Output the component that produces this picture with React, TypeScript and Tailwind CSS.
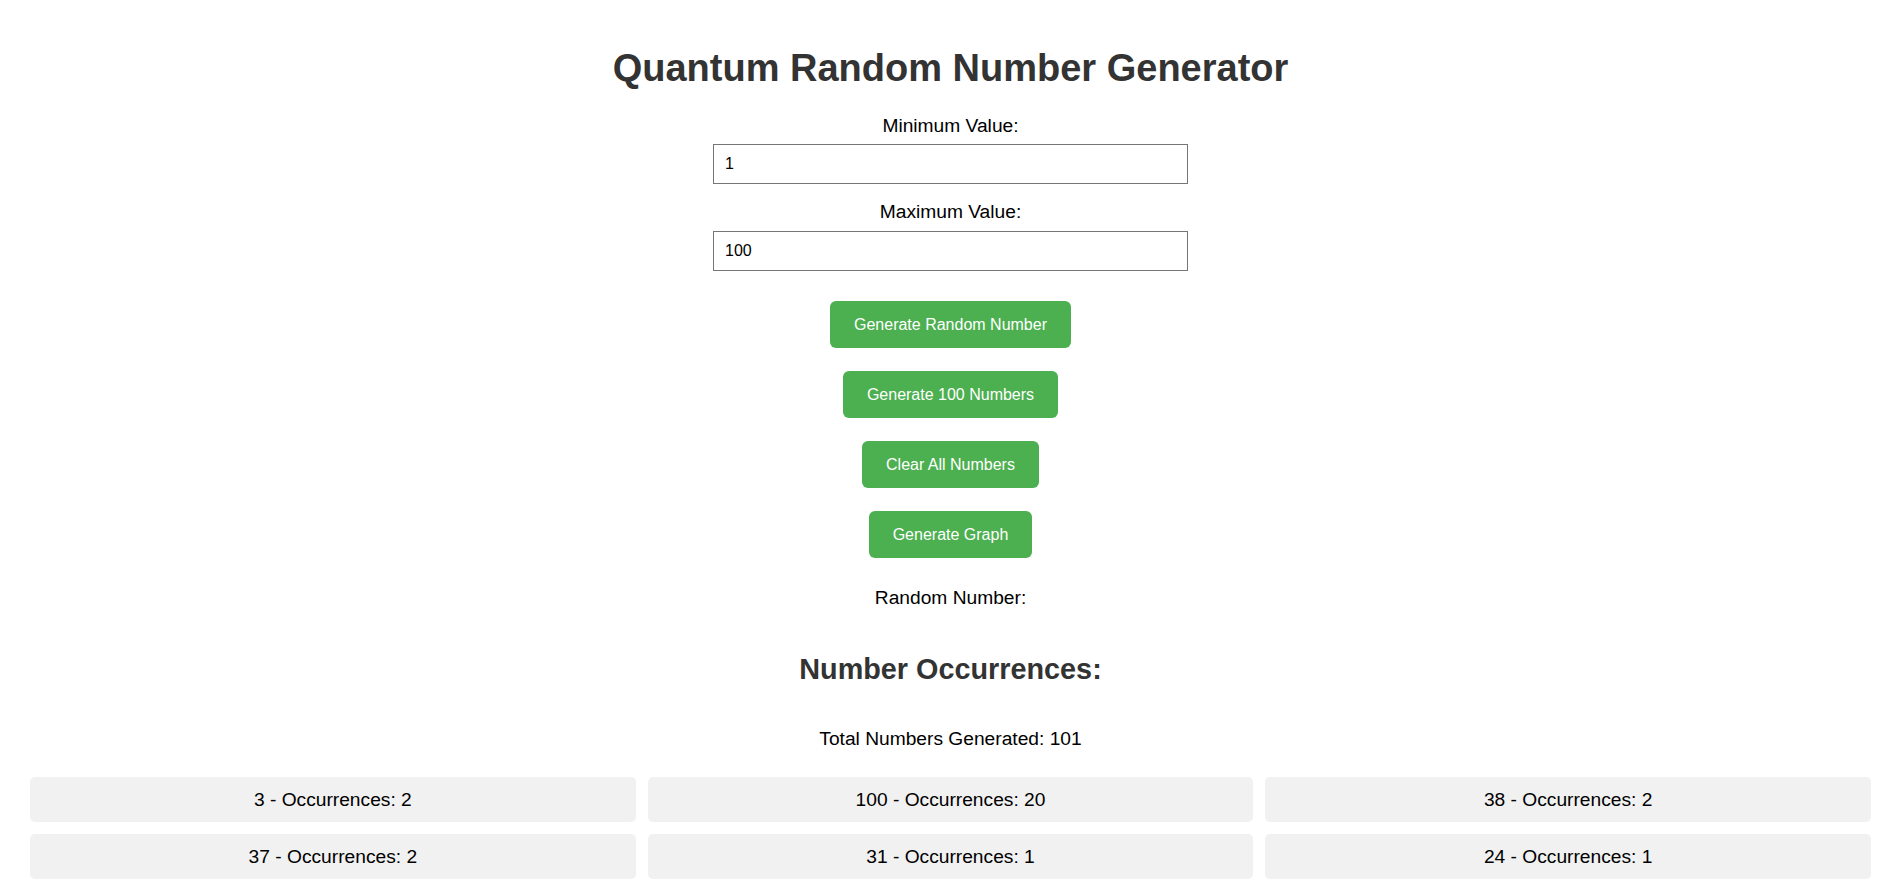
import React from "react";

const cells = [
  "3 - Occurrences: 2",
  "100 - Occurrences: 20",
  "38 - Occurrences: 2",
  "37 - Occurrences: 2",
  "31 - Occurrences: 1",
  "24 - Occurrences: 1",
];

const buttons = [
  "Generate Random Number",
  "Generate 100 Numbers",
  "Clear All Numbers",
  "Generate Graph",
];

export default function App() {
  return (
    <div
      className="min-h-[885px] w-full bg-white text-black"
      style={{ fontFamily: '"Liberation Sans", Arial, Helvetica, sans-serif' }}
    >
      <div className="flex flex-col items-center pt-[46px]">
        <h1 className="text-[38px] font-bold leading-[44px] text-[#333333]">
          Quantum Random Number Generator
        </h1>
        <label className="mt-[25px] text-[19.2px] leading-[22px]">Minimum Value:</label>
        <input
          className="mt-[7px] h-[40px] w-[475px] border border-[#767676] px-[11px] text-[16px] outline-none"
          defaultValue="1"
        />
        <label className="mt-[17px] text-[19.2px] leading-[22px]">Maximum Value:</label>
        <input
          className="mt-[8px] h-[40px] w-[475px] border border-[#767676] px-[11px] text-[16px] outline-none"
          defaultValue="100"
        />
        <div className="mt-[30px] flex flex-col items-center gap-[23px]">
          {buttons.map((b) => (
            <button
              key={b}
              className="h-[47px] rounded-[6px] bg-[#4caf50] px-[24px] text-[16px] leading-[18px] text-white"
            >
              {b}
            </button>
          ))}
        </div>
        <p className="mt-[29px] text-[19.2px] leading-[22px]">Random Number:</p>
        <h2 className="mt-[44px] text-[28.8px] font-bold leading-[33px] text-[#333333]">
          Number Occurrences:
        </h2>
        <p className="mt-[42px] text-[19.2px] leading-[22px]">Total Numbers Generated: 101</p>
      </div>
      <div className="mt-[27px] grid grid-cols-3 gap-[12px] px-[30px]">
        {cells.map((c) => (
          <div
            key={c}
            className="flex h-[45px] items-center justify-center rounded-[5px] bg-[#f1f1f1] text-[19.2px] leading-[22px]"
          >
            {c}
          </div>
        ))}
      </div>
    </div>
  );
}
